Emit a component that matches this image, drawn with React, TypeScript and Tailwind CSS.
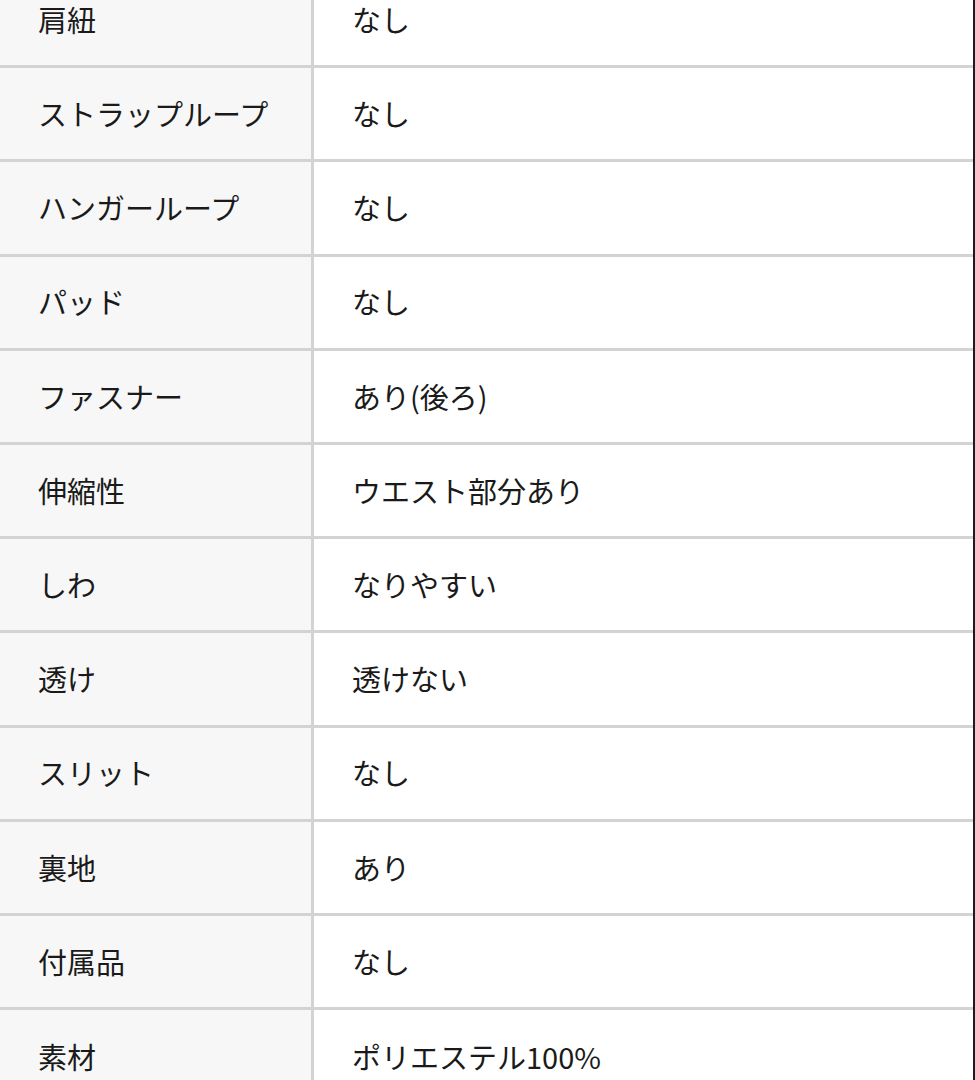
const rows: [string, string][] = [
  ['肩紐', 'なし'],
  ['ストラップループ', 'なし'],
  ['ハンガーループ', 'なし'],
  ['パッド', 'なし'],
  ['ファスナー', 'あり(後ろ)'],
  ['伸縮性', 'ウエスト部分あり'],
  ['しわ', 'なりやすい'],
  ['透け', '透けない'],
  ['スリット', 'なし'],
  ['裏地', 'あり'],
  ['付属品', 'なし'],
  ['素材', 'ポリエステル100%'],
];

export default function App() {
  return (
    <div className="h-[1080px] w-[975px] overflow-hidden bg-white">
      <div
        className="mt-[-26px] border-r-2 border-[#1c1c1c] text-[29px] text-[#1a1a1a]"
        style={{ fontFamily: '"Noto Sans CJK JP", "Noto Sans", sans-serif' }}
      >
        {rows.map(([label, value], i) => (
          <div
            key={label}
            className={`flex h-[94.2px] ${i < rows.length - 1 ? 'border-b-[3px] border-[#d3d3d3]' : ''}`}
          >
            <div className="flex w-[314px] shrink-0 items-center border-r-[3px] border-[#d3d3d3] bg-[#f7f7f7] pl-[38px]">
              {label}
            </div>
            <div className="flex flex-1 items-center pl-[38px]">{value}</div>
          </div>
        ))}
      </div>
    </div>
  );
}
